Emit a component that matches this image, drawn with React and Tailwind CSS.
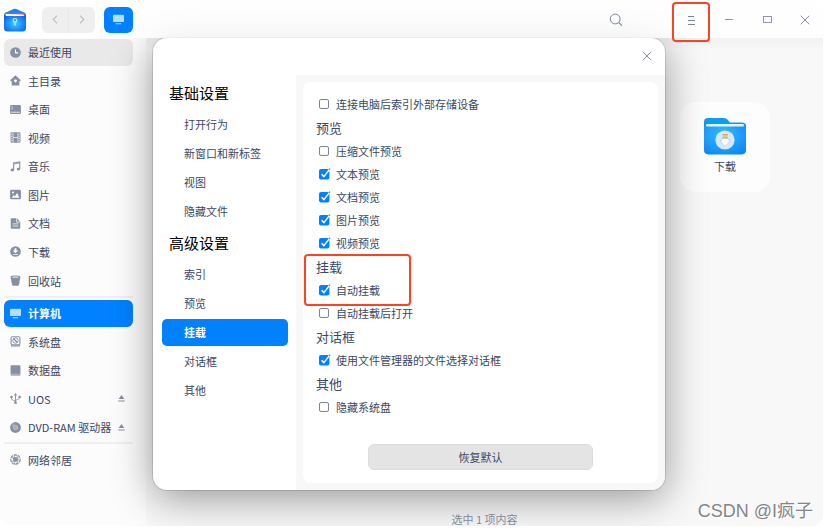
import React, { useState } from 'react';
import { clsx } from 'clsx';

const icons = {
  recent: (
    <>
      <circle cx="6" cy="6" r="5.8" fill="currentColor" />
      <path d="M6 2.8V6.4H9" fill="none" stroke="#fff" strokeWidth="1.2" />
    </>
  ),
  home: (
    <path
      fill="currentColor"
      fillRule="evenodd"
      d="M6 .2 11.8 5.6 11 6.8H10.2V11.4H1.8V6.8H1L.2 5.6ZM6 5C4.9 4.3 3.9 5.6 4.5 6.6L6 8.4 7.5 6.6C8.1 5.6 7.1 4.3 6 5Z"
    />
  ),
  desktop: (
    <>
      <rect x="0.1" y="1" width="11.8" height="10" rx="1.2" fill="currentColor" />
      <path d="M1.6 3.2H3M1.6 5.2H3M1.2 9H10.8" stroke="#fff" strokeWidth=".8" />
    </>
  ),
  video: (
    <>
      <rect x="0.6" y="0.4" width="10.8" height="11.2" rx="1.2" fill="currentColor" />
      <path d="M3.4.6V11.4M8.6.6V11.4" stroke="#fff" strokeWidth=".7" />
      <path d="M2 1.8V11M10 1.8V11" stroke="#fff" strokeWidth="1.1" strokeDasharray="1.1 1.3" />
      <path d="M3.4 6H8.6" stroke="#fff" strokeWidth=".7" />
    </>
  ),
  music: (
    <>
      <path d="M4 9.6V2.2L10.6 1V8.6" fill="none" stroke="currentColor" strokeWidth="1.2" />
      <path d="M4 3.4 10.6 2.2" stroke="currentColor" strokeWidth=".9" />
      <ellipse cx="2.6" cy="9.8" rx="2" ry="1.6" fill="currentColor" />
      <ellipse cx="9.3" cy="8.8" rx="1.9" ry="1.5" fill="currentColor" />
    </>
  ),
  picture: (
    <>
      <rect x="0.1" y="0.8" width="11.8" height="10.4" rx="1.4" fill="currentColor" />
      <circle cx="3.2" cy="3.7" r="1.1" fill="#fff" />
      <path d="M1.8 9.6 4 6.6 5.4 7.8 7.8 4.4 10.2 9.6Z" fill="#fff" />
    </>
  ),
  document: (
    <>
      <path d="M.8 1.4Q.8.3 1.9.3H7.4L11.2 4.1V10.5Q11.2 11.6 10.1 11.6H1.9Q.8 11.6.8 10.5Z" fill="currentColor" />
      <path d="M7.2.3V4.4H11.2M2.8 6.4H9.2M2.8 8.8H9.2" fill="none" stroke="#fff" strokeWidth=".8" />
    </>
  ),
  download: (
    <>
      <circle cx="6" cy="6" r="5.8" fill="currentColor" />
      <path d="M5 2.4H7V5H9L6 8 3 5H5ZM3.4 8.8H8.6V9.6H3.4Z" fill="#fff" />
    </>
  ),
  trash: (
    <>
      <path d="M.7 2.2 2.2 10.7Q2.4 11.6 3.4 11.6H8.6Q9.6 11.6 9.8 10.7L11.3 2.2Z" fill="currentColor" />
      <ellipse cx="6" cy="2.1" rx="5.3" ry="1.6" fill="currentColor" />
      <ellipse cx="6" cy="2.2" rx="3.8" ry=".6" fill="#fff" />
    </>
  ),
  computer: (
    <>
      <rect x="0" y="0.8" width="12" height="8" rx="1" fill="currentColor" />
      <path d="M3 10H9V11.2H3Z" fill="currentColor" />
    </>
  ),
  systemDisk: (
    <>
      <rect x="1.2" y="0.8" width="9.6" height="8.8" rx="1.2" fill="none" stroke="currentColor" strokeWidth="1.2" />
      <circle cx="6" cy="5" r="2.9" fill="none" stroke="currentColor" strokeWidth="1" />
      <path d="M3.6 2.8 8.2 7M1 10.8H11" stroke="currentColor" strokeWidth="1.4" />
    </>
  ),
  dataDisk: (
    <>
      <rect x="0.6" y="0.4" width="10.8" height="9" rx="1.2" fill="currentColor" />
      <path d="M.6 8.4H11.4V10.6Q11.4 11.6 10.4 11.6H1.6Q.6 11.6.6 10.6Z" fill="currentColor" opacity=".75" />
    </>
  ),
  usb: (
    <>
      <path
        d="M6 1.6V10M6 8.8C2.6 8.2 1.6 7.4 1.6 4.6M6 7.8C9.4 7.2 10.4 6.4 10.4 4.6"
        fill="none"
        stroke="currentColor"
        strokeWidth="1"
      />
      <path d="M6 0 7.8 2.6H4.2Z" fill="currentColor" />
      <circle cx="6" cy="10.5" r="1.5" fill="currentColor" />
      <circle cx="1.6" cy="4.4" r="1.4" fill="currentColor" />
      <rect x="9.2" y="3.1" width="2.5" height="2.5" fill="currentColor" />
    </>
  ),
  disc: (
    <>
      <circle cx="6" cy="6" r="5.9" fill="currentColor" />
      <circle cx="6" cy="6" r="2.4" fill="#a5acba" stroke="#c5cad4" strokeWidth=".8" />
      <path d="M2.4 4.6A4 4 0 0 1 5 2.2" fill="none" stroke="#c5cad4" strokeWidth=".8" />
    </>
  ),
  network: (
    <>
      <circle cx="6" cy="6" r="5.1" fill="none" stroke="currentColor" strokeWidth="1.3" strokeDasharray="3.4 .9" />
      <circle cx="6" cy="6" r="2.6" fill="currentColor" />
      <path
        d="M6 .8C3.4 3 3.4 9 6 11.2M6 .8C9.8 3 9.8 9 6 11.2M1.6 3.6 4.4 5M1.6 8.6 4.4 7.2"
        fill="none"
        stroke="currentColor"
        strokeWidth=".9"
      />
    </>
  ),
};

const places = [
  [
    { icon: 'recent', label: '最近使用', hovered: true },
    { icon: 'home', label: '主目录' },
    { icon: 'desktop', label: '桌面' },
    { icon: 'video', label: '视频' },
    { icon: 'music', label: '音乐' },
    { icon: 'picture', label: '图片' },
    { icon: 'document', label: '文档' },
    { icon: 'download', label: '下载' },
    { icon: 'trash', label: '回收站' },
  ],
  [
    { icon: 'computer', label: '计算机', active: true },
    { icon: 'systemDisk', label: '系统盘' },
    { icon: 'dataDisk', label: '数据盘' },
    { icon: 'usb', label: 'UOS', eject: true },
    { icon: 'disc', label: 'DVD-RAM 驱动器', eject: true },
  ],
  [{ icon: 'network', label: '网络邻居' }],
];

const groupGrow = ['flex-[9]', 'flex-[5]', 'flex-[1]'];

const settingsNav = [
  { title: '基础设置', items: ['打开行为', '新窗口和新标签', '视图', '隐藏文件'] },
  { title: '高级设置', items: ['索引', '预览', '挂载', '对话框', '其他'] },
];

const Icon = ({ name, className }) => (
  <svg viewBox="0 0 12 12" className={clsx('size-[11px] shrink-0', className)} aria-hidden="true">
    {icons[name]}
  </svg>
);

const Logo = () => (
  <svg viewBox="0 0 24 24" className="size-6 shrink-0" aria-hidden="true">
    <defs>
      <radialGradient id="logoBody" cx=".5" cy=".55" r=".65">
        <stop offset="0" stopColor="#3ccbff" />
        <stop offset=".5" stopColor="#1c95fb" />
        <stop offset="1" stopColor="#0b5ce8" />
      </radialGradient>
    </defs>
    <path d="M1 7Q1 5.2 2.8 4.4L10.6 1.1Q12 .6 13.4 1.1L21.2 4.4Q23 5.2 23 7V12H1Z" fill="#0a8ff0" />
    <path d="M2.6 5.4Q2.8 4.8 3.6 4.8H20.4Q21.4 4.8 21.4 5.8V8H2.6Z" fill="#f4426a" />
    <path d="M2.6 6 20 6.4Q21.4 6.6 21.4 8V9H2.6Z" fill="#fff" />
    <path d="M1 6.6Q2 8 4 8H20Q22 8 23 6.6V20Q23 23.4 19.6 23.4H4.4Q1 23.4 1 20Z" fill="url(#logoBody)" />
    <circle cx="12" cy="12.4" r="1.9" fill="none" stroke="#c9efff" strokeWidth="1.1" />
    <path d="M12 13.6V17.6" stroke="#c9efff" strokeWidth="1.3" />
  </svg>
);

const FolderIcon = () => (
  <svg viewBox="0 0 44 38" className="h-[38px] w-11" aria-hidden="true">
    <defs>
      <radialGradient id="folderBody" cx=".45" cy=".35" r=".8">
        <stop offset="0" stopColor="#37bcfb" />
        <stop offset="1" stopColor="#0a82f8" />
      </radialGradient>
      <linearGradient id="arrow" x1="0" y1="0" x2="0" y2="1">
        <stop offset="0" stopColor="#f77a6b" />
        <stop offset=".4" stopColor="#ffd76a" />
        <stop offset=".7" stopColor="#8fd98a" />
        <stop offset="1" stopColor="#a99df0" />
      </linearGradient>
    </defs>
    <path d="M1 5Q1 1 5 1H21Q23 1 24.4 2.6L27 5.4H39Q43 5.4 43 9V20H1Z" fill="#0b9df0" />
    <rect x="3" y="7" width="38" height="8" rx="1.4" fill="#e3f6ff" />
    <path d="M1 7Q1.6 9.6 4 9.6H40Q42.4 9.6 43 7V33Q43 37.4 38.6 37.4H5.4Q1 37.4 1 33Z" fill="url(#folderBody)" />
    <circle cx="22" cy="23" r="9.6" fill="#d3ebfc" />
    <path d="M19.6 17H24.8V22H19.6Z" fill="url(#arrow)" />
    <path d="M19.6 21.4H24.8L27 24.4 22 29.4 17.2 24.4Z" fill="#fff" stroke="#b4bcf2" strokeWidth=".8" />
  </svg>
);

const CloseIcon = () => (
  <svg viewBox="0 0 10 10" className="size-[10px]" aria-hidden="true">
    <path d="M.7.7 9.3 9.3M9.3.7.7 9.3" stroke="#7b8598" strokeWidth=".9" />
  </svg>
);

const Highlight = ({ className }) => (
  <span className={clsx('pointer-events-none absolute rounded-[4px] border-2 border-[#f9441f]', className)} />
);

const TitleBar = () => (
  <header className="relative z-20 flex h-[37px] shrink-0 items-center bg-white/70">
    <div className="flex flex-1 items-center pl-[3px]">
      <Logo />
      <div className="ml-[15px] flex h-[26px] w-[53px] rounded-md bg-[#efefef] text-[#b9bcc2]">
        <button aria-label="后退" className="flex flex-1 items-center justify-center border-r border-[#e8e8e8]">
          <svg viewBox="0 0 6 10" className="h-[9px] w-[6px]"><path d="M5.2.8 1 5 5.2 9.2" fill="none" stroke="currentColor" strokeWidth="1.2" /></svg>
        </button>
        <button aria-label="前进" className="flex flex-1 items-center justify-center">
          <svg viewBox="0 0 6 10" className="h-[9px] w-[6px]"><path d="M.8.8 5 5 .8 9.2" fill="none" stroke="currentColor" strokeWidth="1.2" /></svg>
        </button>
      </div>
      <button aria-label="计算机" className="ml-[9px] flex h-[26px] w-[29px] items-center justify-center rounded-md bg-[#0081ff]">
        <Icon name="computer" className="text-[#b8dcff]" />
      </button>
    </div>
    <button aria-label="搜索" className="mr-[49px] flex size-[14px] items-center justify-center">
      <svg viewBox="0 0 14 14" className="size-[14px]">
        <circle cx="6.2" cy="6" r="4.9" fill="none" stroke="#7b8598" />
        <path d="M9.8 9.6 13 12.6" stroke="#7b8598" strokeWidth="1.1" />
      </svg>
    </button>
    <div className="-mr-px flex h-full">
      <button aria-label="菜单" className="relative flex w-[38px] items-center justify-center">
        <svg viewBox="0 0 10 10" className="size-[10px]">
          <path d="M2 1.5H8M2 5.5H9M2 9.5H9" stroke="#7b8598" strokeWidth="1" />
        </svg>
        <Highlight className="inset-x-0 top-px -bottom-1" />
      </button>
      <button aria-label="最小化" className="flex w-[38px] items-center justify-center">
        <span className="h-px w-2 bg-[#8f98a8]" />
      </button>
      <button aria-label="最大化" className="flex w-[38px] items-center justify-center">
        <span className="h-[7px] w-[9px] border border-[#8f98a8]" />
      </button>
      <button aria-label="关闭" className="flex w-[38px] items-center justify-center">
        <CloseIcon />
      </button>
    </div>
  </header>
);

const PlaceItem = ({ item }) => (
  <li className="flex min-h-0 flex-1 items-center">
    <a
      href="#"
      className={clsx(
        'flex h-[27px] min-w-0 flex-1 items-center gap-[7px] rounded-md pr-2 pl-[6px]',
        item.active && 'bg-[#0081ff] font-bold text-white',
        item.hovered && 'bg-[#e9e9e9]'
      )}
    >
      <Icon name={item.icon} className={item.active ? 'text-[#b8dcff]' : 'text-[#8790a2]'} />
      <span className="min-w-0 flex-1 whitespace-nowrap">{item.label}</span>
      {item.eject && (
        <svg viewBox="0 0 7 7" className="size-[7px] shrink-0 text-[#8790a2]" aria-hidden="true">
          <path d="M3.5 0 6.4 4H.6ZM.3 5.4H6.7V6.4H.3Z" fill="currentColor" />
        </svg>
      )}
    </a>
  </li>
);

const Sidebar = () => (
  <nav className="flex w-[146px] shrink-0 flex-col bg-[#fcfcfc] pr-[13px] pb-[52px] pl-1">
    {places.map((group, index) => (
      <React.Fragment key={index}>
        {index > 0 && <hr className="my-px h-[2px] border-0 bg-[#f0f0f0]" />}
        <ul className={clsx('flex min-h-0 flex-col', groupGrow[index])}>
          {group.map((item) => (
            <PlaceItem key={item.label} item={item} />
          ))}
        </ul>
      </React.Fragment>
    ))}
  </nav>
);

const Option = ({ label, defaultChecked = false }) => (
  <label className="flex h-[23px] items-center gap-[7px] pl-[3px]">
    <span className="relative flex size-[10px]">
      <input
        type="checkbox"
        defaultChecked={defaultChecked}
        className="peer size-[10px] appearance-none rounded-[2px] border border-[#7d879b] checked:border-transparent"
      />
      <svg
        viewBox="0 0 12 12"
        className="pointer-events-none absolute -top-px left-0 hidden size-3 peer-checked:block"
        aria-hidden="true"
      >
        <rect x="0" y="1" width="10.4" height="10.4" rx="2" fill="#0081ff" />
        <path d="M2.6 6.2 4.9 8.6 10.4 1.6" fill="none" stroke="#fff" strokeWidth="1.5" />
        <path d="M10 1.6 11 .6" stroke="#0081ff" strokeWidth="1.2" />
      </svg>
    </span>
    {label}
  </label>
);

const SectionTitle = ({ children }) => <h3 className="flex h-6 items-center text-[13px]">{children}</h3>;

const SettingsDialog = () => {
  const [active, setActive] = useState('高级设置/挂载');

  return (
    <div
      role="dialog"
      aria-label="设置"
      className="flex h-[452px] max-h-full w-[512px] flex-col overflow-hidden rounded-[14px] bg-white shadow-[0_0_0_1px_rgba(0,0,0,0.12),0_8px_40px_rgba(0,0,0,0.4)]"
    >
      <div className="flex h-[37px] shrink-0 items-center justify-end pr-[13px]">
        <button aria-label="关闭设置">
          <CloseIcon />
        </button>
      </div>
      <div className="flex min-h-0 flex-1">
        <nav className="flex w-[143px] shrink-0 flex-col gap-[2px] pt-[2px] pr-2 pl-[9px]">
          {settingsNav.map((section) => (
            <React.Fragment key={section.title}>
              <h2 className="flex h-8 items-center pl-[7px] text-[15px] text-black">{section.title}</h2>
              {section.items.map((item) => {
                const id = `${section.title}/${item}`;
                return (
                  <button
                    key={id}
                    onClick={() => setActive(id)}
                    className={clsx(
                      'h-[27px] shrink-0 rounded-[5px] pl-[22px] text-left',
                      active === id && 'bg-[#0081ff] font-bold text-white'
                    )}
                  >
                    {item}
                  </button>
                );
              })}
            </React.Fragment>
          ))}
        </nav>
        <div className="flex flex-1 bg-[#f8f8f8] p-[7px]">
          <div className="flex flex-1 flex-col rounded-lg bg-white px-[13px] pt-[11px] pb-[13px]">
            <Option label="连接电脑后索引外部存储设备" />
            <SectionTitle>预览</SectionTitle>
            <Option label="压缩文件预览" />
            <Option label="文本预览" defaultChecked />
            <Option label="文档预览" defaultChecked />
            <Option label="图片预览" defaultChecked />
            <Option label="视频预览" defaultChecked />
            <div className="relative">
              <SectionTitle>挂载</SectionTitle>
              <Option label="自动挂载" defaultChecked />
              <Highlight className="-top-px -bottom-1 -left-3 w-[107px]" />
            </div>
            <Option label="自动挂载后打开" />
            <SectionTitle>对话框</SectionTitle>
            <Option label="使用文件管理器的文件选择对话框" defaultChecked />
            <SectionTitle>其他</SectionTitle>
            <Option label="隐藏系统盘" />
            <button className="mt-auto h-[26px] w-[225px] self-center rounded-md border border-[#dcdcdc] bg-[#e4e4e4]">
              恢复默认
            </button>
          </div>
        </div>
      </div>
    </div>
  );
};

export default function App() {
  return (
    <div className="h-screen bg-white pt-px pr-[5px] pb-1 font-['Noto_Sans_CJK_SC',sans-serif] text-[11px] leading-4 text-[#3b4763]">
      <div className="relative flex h-full flex-col overflow-hidden rounded-xl bg-[#fcfcfc]">
        <TitleBar />
        <div className="flex min-h-0 flex-1">
          <Sidebar />
          <main className="flex flex-1 flex-col bg-[#f8f8f8] bg-linear-to-b from-[#f1f1f1] to-[#f8f8f8] to-[12px]">
            <div className="flex flex-1 items-start justify-end pt-16 pr-[53px]">
              <figure className="flex size-[90px] flex-col items-center rounded-2xl bg-[#fdfdfd] pt-[15px]">
                <FolderIcon />
                <figcaption className="mt-[3px]">下载</figcaption>
              </figure>
            </div>
            <footer className="flex h-[14px] items-center justify-center text-[#8a93a5]">选中 1 项内容</footer>
          </main>
        </div>
        <div className="absolute inset-0 z-10 flex items-center justify-center pr-[5px]">
          <SettingsDialog />
        </div>
        <p className="absolute right-[10px] bottom-[3px] z-30 font-['Liberation_Sans','Noto_Sans_CJK_SC',sans-serif] text-[18px] leading-6 text-[#858585] [text-shadow:1px_1px_0_#fff]">
          CSDN @I疯子
        </p>
      </div>
    </div>
  );
}
